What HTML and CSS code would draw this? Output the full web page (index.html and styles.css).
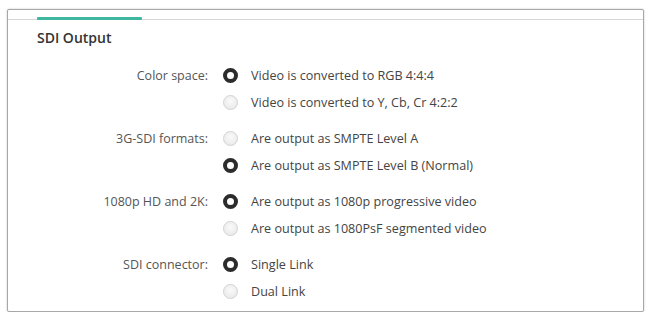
FILE: index.html
```html
<!DOCTYPE html>
<html>
<head>
<meta charset="utf-8">
<link rel="stylesheet" href="styles.css">
</head>
<body>
<div class="panel">
  <div class="tabstrip"><div class="tab-indicator"></div></div>
  <div class="title">SDI Output</div>
  <div class="form">
    <div class="group">
      <div class="label">Color space:</div>
      <div class="radio on"></div>
      <div class="opt">Video is converted to RGB 4:4:4</div>
      <div class="label"></div>
      <div class="radio"></div>
      <div class="opt">Video is converted to Y, Cb, Cr 4:2:2</div>
    </div>
    <div class="group">
      <div class="label">3G-SDI formats:</div>
      <div class="radio"></div>
      <div class="opt">Are output as SMPTE Level A</div>
      <div class="label"></div>
      <div class="radio on"></div>
      <div class="opt">Are output as SMPTE Level B (Normal)</div>
    </div>
    <div class="group">
      <div class="label">1080p HD and 2K:</div>
      <div class="radio on"></div>
      <div class="opt">Are output as 1080p progressive video</div>
      <div class="label"></div>
      <div class="radio"></div>
      <div class="opt">Are output as 1080PsF segmented video</div>
    </div>
    <div class="group">
      <div class="label">SDI connector:</div>
      <div class="radio on"></div>
      <div class="opt">Single Link</div>
      <div class="label"></div>
      <div class="radio"></div>
      <div class="opt">Dual Link</div>
    </div>
  </div>
</div>
</body>
</html>
```
FILE: styles.css
```css
html, body {
  margin: 0;
  padding: 0;
  background: #fff;
}
body {
  font-family: "Open Sans", "Liberation Sans", sans-serif;
  color: #444;
}
.panel {
  margin: 9px 2px 0 7px;
  height: 303px;
  border: 1px solid #a8a8a8;
  border-radius: 2px;
  box-shadow: 0 0 2px rgba(0,0,0,0.25);
  box-sizing: border-box;
  background: #fff;
}
.tabstrip {
  height: 9px;
  border-bottom: 1px solid #d6d6d6;
  display: flex;
  align-items: flex-end;
}
.tab-indicator {
  margin-left: 29px;
  width: 105px;
  height: 3px;
  margin-bottom: -1px;
  background: #3fb6a0;
  border-radius: 1px;
}
.title {
  margin: 8px 0 0 29px;
  font-size: 14px;
  line-height: 19px;
  font-weight: 600;
  color: #333;
}
.form {
  margin-top: 15px;
  display: flex;
  flex-direction: column;
  gap: 9px;
}
.group {
  display: grid;
  grid-template-columns: 200px 15px auto;
  grid-auto-rows: 27px;
  align-items: center;
}
.label {
  font-size: 12.5px;
  color: #555;
  text-align: right;
}
.radio {
  margin-left: 15px;
  width: 15px;
  height: 15px;
  box-sizing: border-box;
  border-radius: 50%;
  border: 1px solid #d2d2d2;
  background: radial-gradient(circle at 50% 40%, #fafafa 0%, #ececec 70%, #e0e0e0 100%);
}
.radio.on {
  border: 4px solid #2c2c2c;
  background: #fff;
}
.opt {
  margin-left: 28px;
  font-size: 12.6px;
  color: #444;
  white-space: nowrap;
}
```
